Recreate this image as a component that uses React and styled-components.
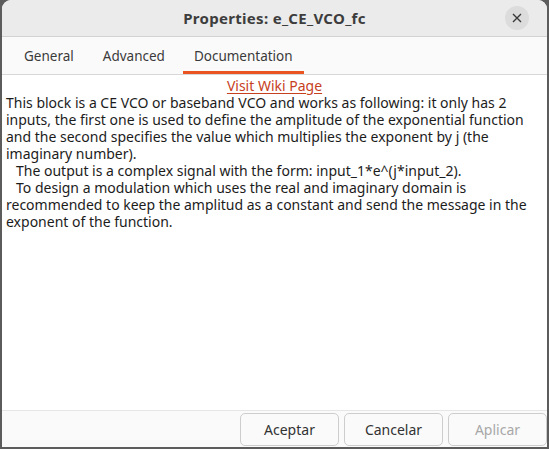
import React from 'react';
import styled, { createGlobalStyle } from 'styled-components';

const Global = createGlobalStyle`
  html, body {
    margin: 0;
    padding: 0;
    background: #5c5c5c;
    font-family: "Noto Sans", "DejaVu Sans", sans-serif;
  }
`;

const Window = styled.div`
  width: 545px;
  height: 447px;
  margin-left: 2px;
  background: #fafafa;
  border-radius: 9px 9px 0 0;
  overflow: hidden;
  display: flex;
  flex-direction: column;
`;

const TitleBar = styled.div`
  height: 36px;
  background: #ebebeb;
  border-bottom: 1px solid #d2d2d2;
  display: flex;
  align-items: center;
  justify-content: center;
  position: relative;
`;

const Title = styled.div`
  font-size: 15px;
  font-weight: 700;
  letter-spacing: 0.3px;
  color: #3d3d3d;
`;

const CloseButton = styled.div`
  position: absolute;
  right: 18px;
  top: 6px;
  width: 24px;
  height: 24px;
  border-radius: 50%;
  background: #dcdcdc;
  display: flex;
  align-items: center;
  justify-content: center;
`;

const Tabs = styled.div`
  height: 37px;
  display: flex;
  padding-left: 11px;
  border-bottom: 1px solid #d8d8d8;
  background: #fafafa;
`;

const Tab = styled.div`
  padding: 0 11px;
  margin-right: 7px;
  display: flex;
  align-items: center;
  font-size: 13.5px;
  color: #3a3a3a;
  position: relative;
  &::after {
    content: "";
    display: ${p => (p.$active ? 'block' : 'none')};
    position: absolute;
    left: 0;
    right: 0;
    bottom: 0;
    height: 3px;
    background: #e95420;
  }
`;

const Content = styled.div`
  flex: 1;
  background: #ffffff;
  padding-top: 2px;
  font-size: 14px;
  line-height: 17px;
  color: #1c1c1c;
`;

const WikiLink = styled.div`
  text-align: center;
  color: #c7401d;
  text-decoration: underline;
  text-underline-offset: 2px;
`;

const Line = styled.div`
  padding-left: ${p => (p.$indent ? 14 : 4)}px;
  white-space: nowrap;
`;

const Footer = styled.div`
  height: 36px;
  background: #fafafa;
  border-top: 1px solid #e6e6e6;
  display: flex;
  justify-content: flex-end;
  align-items: center;
  gap: 5px;
`;

const Button = styled.div`
  width: 99px;
  height: 33px;
  box-sizing: border-box;
  border: 1px solid #cdcdcd;
  border-radius: 5px;
  background: #fafafa;
  display: flex;
  align-items: center;
  justify-content: center;
  font-size: 14px;
  color: ${p => (p.$disabled ? '#a8a8a8' : '#333333')};
`;

const lines = [
  { t: 'This block is a CE VCO or baseband VCO and works as following: it only has 2' },
  { t: 'inputs, the first one is used to define the amplitude of the exponential function' },
  { t: 'and the second specifies the value which multiplies the exponent by j (the' },
  { t: 'imaginary number).' },
  { t: 'The output is a complex signal with the form: input_1*e^(j*input_2).', indent: true },
  { t: 'To design a modulation which uses the real and imaginary domain is', indent: true },
  { t: 'recommended to keep the amplitud as a constant and send the message in the' },
  { t: 'exponent of the function.' },
];

export default function App() {
  return (
    <>
      <Global />
      <Window>
        <TitleBar>
          <Title>Properties: e_CE_VCO_fc</Title>
          <CloseButton>
            <svg width="10" height="10" viewBox="0 0 10 10">
              <path d="M1 1L9 9M9 1L1 9" stroke="#3a3a3a" strokeWidth="1.4" />
            </svg>
          </CloseButton>
        </TitleBar>
        <Tabs>
          <Tab>General</Tab>
          <Tab>Advanced</Tab>
          <Tab $active>Documentation</Tab>
        </Tabs>
        <Content>
          <WikiLink>Visit Wiki Page</WikiLink>
          {lines.map((l, i) => (
            <Line key={i} $indent={l.indent}>{l.t}</Line>
          ))}
        </Content>
        <Footer>
          <Button>Aceptar</Button>
          <Button>Cancelar</Button>
          <Button $disabled>Aplicar</Button>
        </Footer>
      </Window>
    </>
  );
}
